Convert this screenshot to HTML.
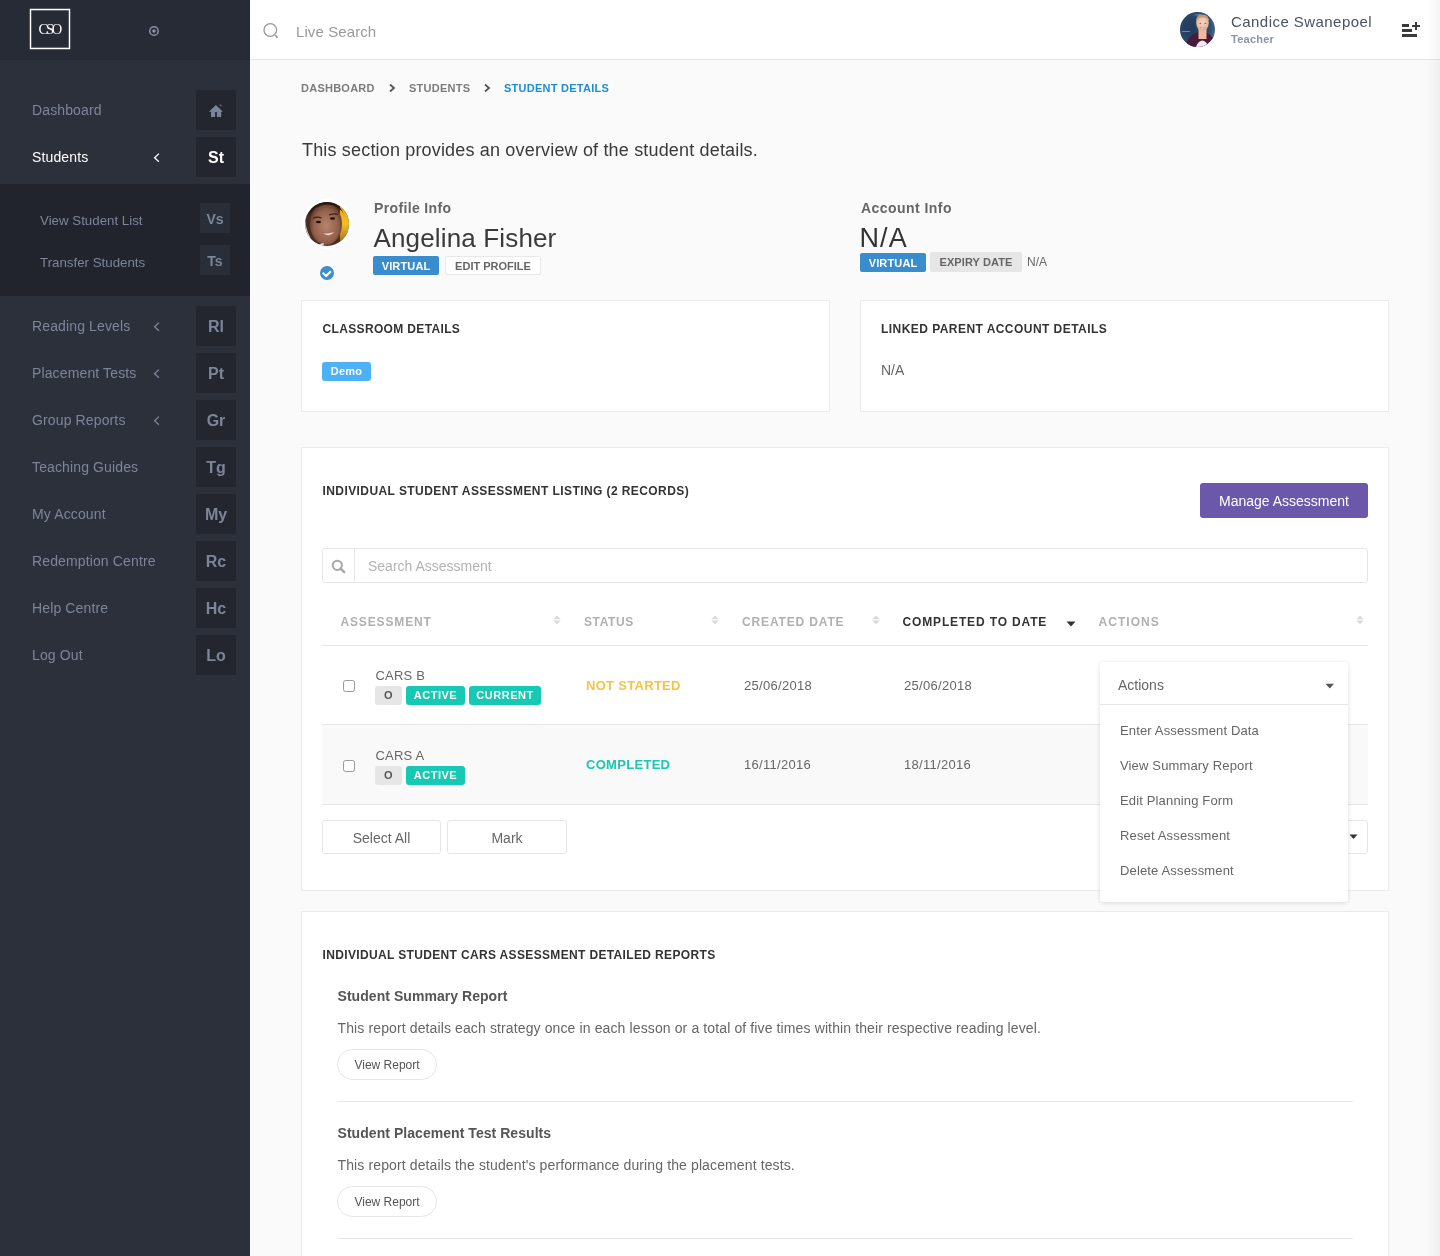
<!DOCTYPE html>
<html><head><meta charset="utf-8"><title>Student Details</title>
<style>
html,body{margin:0;padding:0}
body{width:1440px;height:1256px;overflow:hidden;position:relative;background:#fafafa;font-family:"Liberation Sans",sans-serif}
.r{position:absolute}
.t{position:absolute;line-height:1;white-space:nowrap}
#wrap{position:absolute;left:0;top:0;width:1440px;height:1256px;will-change:transform}
</style></head><body>
<div id="wrap">
<div class="r" style="left:0px;top:0px;width:250px;height:1256px;background:#2c303b"></div>
<div class="r" style="left:0px;top:0px;width:250px;height:60px;background:#272b36"></div>
<div class="r" style="left:30px;top:9px;width:40px;height:40px;border:1px solid #fff;box-sizing:border-box;box-shadow:0 0 0 0.4px rgba(255,255,255,.6), inset 0 0 0 0.4px rgba(255,255,255,.6)"></div>
<div class="t " style="left:38.5px;top:21.73px;font-size:14.5px;color:#fff;font-weight:400;font-family:'Liberation Serif',serif;letter-spacing:-2.2px">CSO</div>
<svg class="r" style="left:147px;top:24px" width="14" height="14" viewBox="0 0 14 14"><circle cx="7" cy="7" r="4.3" fill="none" stroke="#8a92a4" stroke-width="1.5"/><circle cx="7" cy="7" r="1.8" fill="#8a92a4"/></svg>
<div class="t " style="left:32px;top:103.15px;font-size:14px;color:#7d8598;font-weight:400;letter-spacing:0.13px">Dashboard</div>
<div class="r" style="left:196px;top:90px;width:40px;height:40px;background:#23262e"></div>
<svg class="r" style="left:206px;top:100px" width="20" height="20" viewBox="0 0 20 20"><path d="M9.9 5 L2.9 11.8 L5 11.8 L5 17 L9.1 17 L9.1 12.1 L10.9 12.1 L10.9 17 L15.2 17 L15.2 11.8 L16.9 11.8 Z" fill="#7b8499"/><path d="M13.2 4.7 L15.3 4.7 L15.3 6.9 Z" fill="#7b8499"/></svg>
<div class="t " style="left:32px;top:150.15px;font-size:14px;color:#fff;font-weight:400;letter-spacing:0.13px">Students</div>
<div class="r" style="left:196px;top:137px;width:40px;height:40px;background:#23262e"></div>
<div class="r" style="left:196px;top:137px;width:40px;height:40px;"></div>
<div class="t" style="left:196px;top:150.46px;width:40px;text-align:center;font-size:16px;color:#fff;font-weight:700;">St</div>
<svg class="r" style="left:151px;top:151px" width="10" height="12" viewBox="0 0 10 12"><path d="M7.9 2.6 L3.6 6.7 L7.9 10.8" fill="none" stroke="#fff" stroke-width="1.3"/></svg>
<div class="r" style="left:0px;top:184px;width:250px;height:112px;background:#21242c"></div>
<div class="t " style="left:40px;top:213.74px;font-size:13.3px;color:#7d8598;font-weight:400;">View Student List</div>
<div class="r" style="left:200px;top:203px;width:30px;height:30px;background:#2a2e38"></div>
<div class="t" style="left:200px;top:211.65px;width:30px;text-align:center;font-size:14px;color:#7d8598;font-weight:700;">Vs</div>
<div class="t " style="left:40px;top:255.74px;font-size:13.3px;color:#7d8598;font-weight:400;">Transfer Students</div>
<div class="r" style="left:200px;top:245px;width:30px;height:30px;background:#2a2e38"></div>
<div class="t" style="left:200px;top:253.65px;width:30px;text-align:center;font-size:14px;color:#7d8598;font-weight:700;">Ts</div>
<div class="t " style="left:32px;top:319.15px;font-size:14px;color:#7d8598;font-weight:400;letter-spacing:0.13px">Reading Levels</div>
<div class="r" style="left:196px;top:306px;width:40px;height:40px;background:#23262e"></div>
<div class="r" style="left:196px;top:306px;width:40px;height:40px;"></div>
<div class="t" style="left:196px;top:319.46px;width:40px;text-align:center;font-size:16px;color:#7d8598;font-weight:700;">Rl</div>
<svg class="r" style="left:151px;top:320px" width="10" height="12" viewBox="0 0 10 12"><path d="M7.9 2.6 L3.6 6.7 L7.9 10.8" fill="none" stroke="#7d8598" stroke-width="1.3"/></svg>
<div class="t " style="left:32px;top:366.15px;font-size:14px;color:#7d8598;font-weight:400;letter-spacing:0.13px">Placement Tests</div>
<div class="r" style="left:196px;top:353px;width:40px;height:40px;background:#23262e"></div>
<div class="r" style="left:196px;top:353px;width:40px;height:40px;"></div>
<div class="t" style="left:196px;top:366.46px;width:40px;text-align:center;font-size:16px;color:#7d8598;font-weight:700;">Pt</div>
<svg class="r" style="left:151px;top:367px" width="10" height="12" viewBox="0 0 10 12"><path d="M7.9 2.6 L3.6 6.7 L7.9 10.8" fill="none" stroke="#7d8598" stroke-width="1.3"/></svg>
<div class="t " style="left:32px;top:413.15px;font-size:14px;color:#7d8598;font-weight:400;letter-spacing:0.13px">Group Reports</div>
<div class="r" style="left:196px;top:400px;width:40px;height:40px;background:#23262e"></div>
<div class="r" style="left:196px;top:400px;width:40px;height:40px;"></div>
<div class="t" style="left:196px;top:413.46px;width:40px;text-align:center;font-size:16px;color:#7d8598;font-weight:700;">Gr</div>
<svg class="r" style="left:151px;top:414px" width="10" height="12" viewBox="0 0 10 12"><path d="M7.9 2.6 L3.6 6.7 L7.9 10.8" fill="none" stroke="#7d8598" stroke-width="1.3"/></svg>
<div class="t " style="left:32px;top:460.15px;font-size:14px;color:#7d8598;font-weight:400;letter-spacing:0.13px">Teaching Guides</div>
<div class="r" style="left:196px;top:447px;width:40px;height:40px;background:#23262e"></div>
<div class="r" style="left:196px;top:447px;width:40px;height:40px;"></div>
<div class="t" style="left:196px;top:460.46px;width:40px;text-align:center;font-size:16px;color:#7d8598;font-weight:700;">Tg</div>
<div class="t " style="left:32px;top:507.15px;font-size:14px;color:#7d8598;font-weight:400;letter-spacing:0.13px">My Account</div>
<div class="r" style="left:196px;top:494px;width:40px;height:40px;background:#23262e"></div>
<div class="r" style="left:196px;top:494px;width:40px;height:40px;"></div>
<div class="t" style="left:196px;top:507.46px;width:40px;text-align:center;font-size:16px;color:#7d8598;font-weight:700;">My</div>
<div class="t " style="left:32px;top:554.15px;font-size:14px;color:#7d8598;font-weight:400;letter-spacing:0.13px">Redemption Centre</div>
<div class="r" style="left:196px;top:541px;width:40px;height:40px;background:#23262e"></div>
<div class="r" style="left:196px;top:541px;width:40px;height:40px;"></div>
<div class="t" style="left:196px;top:554.46px;width:40px;text-align:center;font-size:16px;color:#7d8598;font-weight:700;">Rc</div>
<div class="t " style="left:32px;top:601.15px;font-size:14px;color:#7d8598;font-weight:400;letter-spacing:0.13px">Help Centre</div>
<div class="r" style="left:196px;top:588px;width:40px;height:40px;background:#23262e"></div>
<div class="r" style="left:196px;top:588px;width:40px;height:40px;"></div>
<div class="t" style="left:196px;top:601.46px;width:40px;text-align:center;font-size:16px;color:#7d8598;font-weight:700;">Hc</div>
<div class="t " style="left:32px;top:648.15px;font-size:14px;color:#7d8598;font-weight:400;letter-spacing:0.13px">Log Out</div>
<div class="r" style="left:196px;top:635px;width:40px;height:40px;background:#23262e"></div>
<div class="r" style="left:196px;top:635px;width:40px;height:40px;"></div>
<div class="t" style="left:196px;top:648.46px;width:40px;text-align:center;font-size:16px;color:#7d8598;font-weight:700;">Lo</div>
<div class="r" style="left:250px;top:0px;width:1190px;height:59px;background:#fff"></div>
<div class="r" style="left:250px;top:59px;width:1190px;height:1px;background:#e6e6e6"></div>
<svg class="r" style="left:262px;top:22px" width="20" height="20" viewBox="0 0 20 20"><circle cx="8.3" cy="8" r="6.3" fill="none" stroke="#999" stroke-width="1.3"/><path d="M13.4 13.4 L15.6 15.6" stroke="#999" stroke-width="1.8"/></svg>
<div class="t " style="left:296px;top:24.30px;font-size:15px;color:#9a9a9a;font-weight:400;letter-spacing:0.1px">Live Search</div>
<svg class="r" style="left:1180px;top:12px" width="35" height="35" viewBox="0 0 35 35"><defs><clipPath id="ca"><circle cx="17.5" cy="17.5" r="17.5"/></clipPath><radialGradient id="tbg" cx="0.3" cy="0.45" r="0.8"><stop offset="0" stop-color="#1f3a5a"/><stop offset="0.7" stop-color="#2f4d6e"/><stop offset="1" stop-color="#5a7898"/></radialGradient><radialGradient id="tface" cx="0.5" cy="0.45" r="0.6"><stop offset="0" stop-color="#f6d6c4"/><stop offset="1" stop-color="#e2ac8c"/></radialGradient></defs><g clip-path="url(#ca)"><rect width="35" height="35" fill="url(#tbg)"/><path d="M12 3 L20 2 L28 5 L22 4Z" fill="#8aa4c4" opacity=".7"/><rect x="2" y="19" width="8" height="1" fill="#9ab0cc" opacity=".6"/><path d="M4 40 L8 27 Q14 20 19.5 20 L27 21 Q33 24 35 30 L35 40Z" fill="#4b1c3a"/><rect x="18.5" y="17" width="8" height="10" fill="#eebb9c"/><path d="M15 40 Q16 30 22 28.5 Q28 29 30 40Z" fill="#ecebf4"/><ellipse cx="22.5" cy="11" rx="6.3" ry="8" fill="url(#tface)"/><path d="M16.2 10 Q15.8 2.5 22.5 2.6 Q29 2.6 29 10 Q28 5.5 22.5 5.2 Q17.5 5.5 16.2 10Z" fill="#c49a6c"/><ellipse cx="20.3" cy="11.3" rx="1" ry=".6" fill="#5a6a8a"/><ellipse cx="25.3" cy="11.3" rx="1" ry=".6" fill="#5a6a8a"/><path d="M20 15.5 Q22.7 18.8 25.5 15.5 Q22.7 16.5 20 15.5Z" fill="#fff" stroke="#c77" stroke-width=".5"/></g></svg>
<div class="t " style="left:1231px;top:14.30px;font-size:15px;color:#4a5263;font-weight:400;letter-spacing:0.45px">Candice Swanepoel</div>
<div class="t " style="left:1231px;top:33.69px;font-size:11px;color:#8b94a7;font-weight:700;letter-spacing:0.25px">Teacher</div>
<svg class="r" style="left:1400px;top:20px" width="22" height="20" viewBox="0 0 22 20"><rect x="2" y="4" width="7" height="3" fill="#3a3a3a"/><rect x="2" y="9" width="10" height="3" fill="#3a3a3a"/><rect x="2" y="14" width="15" height="3" fill="#3a3a3a"/><rect x="15" y="2" width="2" height="8" fill="#3a3a3a"/><rect x="12" y="5" width="8" height="2" fill="#3a3a3a"/></svg>
<div class="t " style="left:301px;top:82.69px;font-size:11px;color:#7c7c7c;font-weight:700;letter-spacing:0.25px">DASHBOARD</div>
<svg class="r" style="left:388px;top:83px" width="9" height="10" viewBox="0 0 9 10"><path d="M2 1.5 L6 5 L2 8.5" fill="none" stroke="#555" stroke-width="1.8"/></svg>
<div class="t " style="left:409px;top:82.69px;font-size:11px;color:#7c7c7c;font-weight:700;letter-spacing:0.25px">STUDENTS</div>
<svg class="r" style="left:483px;top:83px" width="9" height="10" viewBox="0 0 9 10"><path d="M2 1.5 L6 5 L2 8.5" fill="none" stroke="#555" stroke-width="1.8"/></svg>
<div class="t " style="left:504px;top:82.69px;font-size:11px;color:#1b8ed4;font-weight:700;letter-spacing:0.25px">STUDENT DETAILS</div>
<div class="t " style="left:302px;top:140.76px;font-size:18px;color:#3a3a3a;font-weight:400;letter-spacing:0.17px">This section provides an overview of the student details.</div>
<svg class="r" style="left:302px;top:199px" width="50" height="50" viewBox="0 0 50 50"><defs><clipPath id="cp"><circle cx="25" cy="25" r="22"/></clipPath><radialGradient id="pface" cx="0.5" cy="0.55" r="0.55"><stop offset="0" stop-color="#b88670"/><stop offset="0.7" stop-color="#93604a"/><stop offset="1" stop-color="#5e3a2c"/></radialGradient><linearGradient id="pyel" x1="0" y1="0" x2="0" y2="1"><stop offset="0" stop-color="#e8a020"/><stop offset="0.5" stop-color="#f4c020"/><stop offset="1" stop-color="#9a6a20"/></linearGradient></defs><circle cx="25" cy="25" r="25" fill="#fff"/><g clip-path="url(#cp)"><rect width="50" height="50" fill="#4a2e24"/><rect x="38" y="5" width="12" height="40" fill="url(#pyel)"/><path d="M3 20 Q4 34 12 44 L6 50 L0 50 L0 20Z" fill="#d8cfc0"/><ellipse cx="24" cy="25" rx="16" ry="21" fill="url(#pface)"/><path d="M6 18 Q9 3 25 2.5 Q38 3 42 16 Q38 6 25 5.5 Q12 6 6 18Z" fill="#2a1812"/><path d="M11 19.5 Q15 17 19.5 19" fill="none" stroke="#3a2418" stroke-width="1.2"/><path d="M27 16 Q32 14 36 15.5" fill="none" stroke="#3a2418" stroke-width="1.2"/><ellipse cx="16.5" cy="23" rx="2.6" ry="1.3" fill="#20120c"/><ellipse cx="30.5" cy="19.5" rx="2.6" ry="1.3" fill="#20120c"/><path d="M20 34 Q27 39.5 33 32.5 Q27 35 20 34Z" fill="#f4f0e8" stroke="#a0504a" stroke-width=".6"/><path d="M14 46 L22 44 L20 50 L12 50Z" fill="#e8e8f0"/></g></svg>
<svg class="r" style="left:320px;top:266px" width="14" height="14" viewBox="0 0 14 14"><circle cx="7" cy="7" r="7" fill="#3b8ed0"/><path d="M2.7 6.8 L6.1 10.1 L10.9 5.3" fill="none" stroke="#fff" stroke-width="2.1"/></svg>
<div class="t " style="left:374px;top:201.15px;font-size:14px;color:#666;font-weight:700;letter-spacing:0.35px">Profile Info</div>
<div class="t " style="left:373.5px;top:224.99px;font-size:26px;color:#3a3a3a;font-weight:400;letter-spacing:0.15px">Angelina Fisher</div>
<div class="r" style="left:373px;top:256px;width:66px;height:19px;background:#3a8dcc;border-radius:2px"></div>
<div class="t" style="left:373px;top:260.69px;width:66px;text-align:center;font-size:11px;color:#fff;font-weight:700;letter-spacing:0.15px">VIRTUAL</div>
<div class="r" style="left:445px;top:256px;width:96px;height:19px;background:#fff;border:1px solid #e8e8e8;box-sizing:border-box;border-radius:2px"></div>
<div class="t" style="left:445px;top:260.69px;width:96px;text-align:center;font-size:11px;color:#666;font-weight:700;letter-spacing:0px">EDIT PROFILE</div>
<div class="t " style="left:861px;top:201.15px;font-size:14px;color:#666;font-weight:700;letter-spacing:0.45px">Account Info</div>
<div class="t " style="left:859.5px;top:225.14px;font-size:27px;color:#333;font-weight:400;letter-spacing:1.1px">N/A</div>
<div class="r" style="left:860px;top:253px;width:66px;height:19px;background:#3a8dcc;border-radius:2px"></div>
<div class="t" style="left:860px;top:257.69px;width:66px;text-align:center;font-size:11px;color:#fff;font-weight:700;letter-spacing:0.15px">VIRTUAL</div>
<div class="r" style="left:930px;top:252px;width:92px;height:20px;background:#e6e6e6;border-radius:2px"></div>
<div class="t" style="left:930px;top:257.19px;width:92px;text-align:center;font-size:11px;color:#666;font-weight:700;letter-spacing:0.1px">EXPIRY DATE</div>
<div class="t " style="left:1027px;top:255.84px;font-size:12px;color:#666;font-weight:400;">N/A</div>
<div class="r" style="left:301px;top:300px;width:529px;height:112px;background:#fff;border:1px solid #ebebeb;box-sizing:border-box"></div>
<div class="t " style="left:322.5px;top:322.84px;font-size:12px;color:#333;font-weight:700;letter-spacing:0.35px">CLASSROOM DETAILS</div>
<div class="r" style="left:322px;top:362px;width:49px;height:19px;background:#4cb1f5;border-radius:3px"></div>
<div class="t" style="left:322px;top:365.69px;width:49px;text-align:center;font-size:11px;color:#fff;font-weight:700;letter-spacing:0.2px">Demo</div>
<div class="r" style="left:860px;top:300px;width:529px;height:112px;background:#fff;border:1px solid #ebebeb;box-sizing:border-box"></div>
<div class="t " style="left:881px;top:322.84px;font-size:12px;color:#333;font-weight:700;letter-spacing:0.45px">LINKED PARENT ACCOUNT DETAILS</div>
<div class="t " style="left:881px;top:363.15px;font-size:14px;color:#666;font-weight:400;">N/A</div>
<div class="r" style="left:301px;top:447px;width:1088px;height:444px;background:#fff;border:1px solid #ebebeb;box-sizing:border-box"></div>
<div class="t " style="left:322.5px;top:484.84px;font-size:12px;color:#333;font-weight:700;letter-spacing:0.42px">INDIVIDUAL STUDENT ASSESSMENT LISTING (2 RECORDS)</div>
<div class="r" style="left:1200px;top:483px;width:168px;height:35px;background:#6b58ab;border-radius:3px"></div>
<div class="t" style="left:1200px;top:494.15px;width:168px;text-align:center;font-size:14px;color:#fff;font-weight:400;">Manage Assessment</div>
<div class="r" style="left:322px;top:548px;width:1046px;height:35px;border:1px solid #e6e6e6;border-radius:3px;box-sizing:border-box;background:#fff"></div>
<div class="r" style="left:354px;top:549px;width:1px;height:33px;background:#e6e6e6"></div>
<svg class="r" style="left:331px;top:559px" width="15" height="15" viewBox="0 0 15 15"><circle cx="6.3" cy="6.3" r="4.6" fill="none" stroke="#a8a8a8" stroke-width="2"/><path d="M9.6 9.6 L13.2 13.2" stroke="#a8a8a8" stroke-width="2.4" stroke-linecap="round"/></svg>
<div class="t " style="left:368px;top:559.15px;font-size:14px;color:#b3b3b3;font-weight:400;">Search Assessment</div>
<div class="t " style="left:340.5px;top:615.84px;font-size:12px;color:#b0b0b0;font-weight:700;letter-spacing:0.85px">ASSESSMENT</div>
<div class="t " style="left:584px;top:615.84px;font-size:12px;color:#b0b0b0;font-weight:700;letter-spacing:0.6px">STATUS</div>
<div class="t " style="left:742px;top:615.84px;font-size:12px;color:#b0b0b0;font-weight:700;letter-spacing:0.85px">CREATED DATE</div>
<div class="t " style="left:902.5px;top:615.84px;font-size:12px;color:#333;font-weight:700;letter-spacing:0.85px">COMPLETED TO DATE</div>
<div class="t " style="left:1098.5px;top:615.84px;font-size:12px;color:#b0b0b0;font-weight:700;letter-spacing:1.05px">ACTIONS</div>
<svg class="r" style="left:553px;top:615px" width="8" height="10" viewBox="0 0 8 10"><path d="M0.3 4.3 L4 0.6 L7.7 4.3Z M0.3 5.5 L4 9.2 L7.7 5.5Z" fill="#d8d8d8"/></svg>
<svg class="r" style="left:711px;top:615px" width="8" height="10" viewBox="0 0 8 10"><path d="M0.3 4.3 L4 0.6 L7.7 4.3Z M0.3 5.5 L4 9.2 L7.7 5.5Z" fill="#d8d8d8"/></svg>
<svg class="r" style="left:872px;top:615px" width="8" height="10" viewBox="0 0 8 10"><path d="M0.3 4.3 L4 0.6 L7.7 4.3Z M0.3 5.5 L4 9.2 L7.7 5.5Z" fill="#d8d8d8"/></svg>
<svg class="r" style="left:1356px;top:615px" width="8" height="10" viewBox="0 0 8 10"><path d="M0.3 4.3 L4 0.6 L7.7 4.3Z M0.3 5.5 L4 9.2 L7.7 5.5Z" fill="#d8d8d8"/></svg>
<svg class="r" style="left:1066px;top:621px" width="10" height="6" viewBox="0 0 10 6"><path d="M0.5 0.5 L9.5 0.5 L5 5.5Z" fill="#333"/></svg>
<div class="r" style="left:322px;top:645px;width:1046px;height:1px;background:#e6e6e6"></div>
<div class="r" style="left:322px;top:724px;width:1046px;height:1px;background:#e6e6e6"></div>
<div class="r" style="left:322px;top:725px;width:1046px;height:79px;background:#f9f9f9"></div>
<div class="r" style="left:322px;top:804px;width:1046px;height:1px;background:#e6e6e6"></div>
<div class="r" style="left:343px;top:680px;width:12px;height:12px;border:1px solid #9a9a9a;border-radius:2.5px;box-sizing:border-box;background:#fff"></div>
<div class="t " style="left:375.5px;top:669.00px;font-size:13px;color:#666;font-weight:400;letter-spacing:0.2px">CARS B</div>
<div class="r" style="left:375px;top:686px;width:27px;height:19px;background:#e6e6e6;border-radius:3px"></div>
<div class="t" style="left:375px;top:690.19px;width:27px;text-align:center;font-size:11px;color:#555;font-weight:700;letter-spacing:0.5px">O</div>
<div class="r" style="left:406px;top:686px;width:59px;height:19px;background:#17c8b4;border-radius:3px"></div>
<div class="t" style="left:406px;top:690.19px;width:59px;text-align:center;font-size:11px;color:#fff;font-weight:700;letter-spacing:0.5px">ACTIVE</div>
<div class="r" style="left:469px;top:686px;width:72px;height:19px;background:#17c8b4;border-radius:3px"></div>
<div class="t" style="left:469px;top:690.19px;width:72px;text-align:center;font-size:11px;color:#fff;font-weight:700;letter-spacing:0.5px">CURRENT</div>
<div class="t " style="left:586px;top:679.00px;font-size:13px;color:#f6c445;font-weight:700;letter-spacing:0.3px">NOT STARTED</div>
<div class="t " style="left:744px;top:679.00px;font-size:13px;color:#666;font-weight:400;letter-spacing:0.3px">25/06/2018</div>
<div class="t " style="left:904px;top:679.00px;font-size:13px;color:#666;font-weight:400;letter-spacing:0.3px">25/06/2018</div>
<div class="r" style="left:343px;top:760px;width:12px;height:12px;border:1px solid #9a9a9a;border-radius:2.5px;box-sizing:border-box;background:#fff"></div>
<div class="t " style="left:375.5px;top:749.00px;font-size:13px;color:#666;font-weight:400;letter-spacing:0.2px">CARS A</div>
<div class="r" style="left:375px;top:766px;width:27px;height:19px;background:#e6e6e6;border-radius:3px"></div>
<div class="t" style="left:375px;top:770.19px;width:27px;text-align:center;font-size:11px;color:#555;font-weight:700;letter-spacing:0.5px">O</div>
<div class="r" style="left:406px;top:766px;width:59px;height:19px;background:#17c8b4;border-radius:3px"></div>
<div class="t" style="left:406px;top:770.19px;width:59px;text-align:center;font-size:11px;color:#fff;font-weight:700;letter-spacing:0.5px">ACTIVE</div>
<div class="t " style="left:586px;top:758.00px;font-size:13px;color:#17c8b4;font-weight:700;letter-spacing:0.3px">COMPLETED</div>
<div class="t " style="left:744px;top:758.00px;font-size:13px;color:#666;font-weight:400;letter-spacing:0.3px">16/11/2016</div>
<div class="t " style="left:904px;top:758.00px;font-size:13px;color:#666;font-weight:400;letter-spacing:0.3px">18/11/2016</div>
<div class="r" style="left:322px;top:820px;width:119px;height:34px;background:#fff;border:1px solid #e6e6e6;border-radius:3px;box-sizing:border-box"></div>
<div class="t" style="left:322px;top:831.15px;width:119px;text-align:center;font-size:14px;color:#666;font-weight:400;">Select All</div>
<div class="r" style="left:447px;top:820px;width:120px;height:34px;background:#fff;border:1px solid #e6e6e6;border-radius:3px;box-sizing:border-box"></div>
<div class="t" style="left:447px;top:831.15px;width:120px;text-align:center;font-size:14px;color:#666;font-weight:400;">Mark</div>
<div class="r" style="left:1100px;top:820px;width:268px;height:34px;background:#fff;border:1px solid #e6e6e6;border-radius:3px;box-sizing:border-box"></div>
<svg class="r" style="left:1349px;top:834px" width="10" height="6" viewBox="0 0 10 6"><path d="M0.5 0.5 L8.5 0.5 L4.5 5Z" fill="#333"/></svg>
<div class="r" style="left:1100px;top:662px;width:248px;height:240px;background:#fff;border-radius:4px;box-shadow:0 1px 5px rgba(0,0,0,0.13)"></div>
<div class="t " style="left:1118px;top:678.15px;font-size:14px;color:#666;font-weight:400;">Actions</div>
<svg class="r" style="left:1325px;top:683px" width="10" height="7" viewBox="0 0 10 7"><path d="M0.5 0.8 L9 0.8 L4.75 5.5Z" fill="#555"/></svg>
<div class="r" style="left:1100px;top:704px;width:248px;height:1px;background:#e6e6e6"></div>
<div class="t " style="left:1120px;top:724.00px;font-size:13px;color:#666;font-weight:400;letter-spacing:0.15px">Enter Assessment Data</div>
<div class="t " style="left:1120px;top:759.00px;font-size:13px;color:#666;font-weight:400;letter-spacing:0.15px">View Summary Report</div>
<div class="t " style="left:1120px;top:794.00px;font-size:13px;color:#666;font-weight:400;letter-spacing:0.15px">Edit Planning Form</div>
<div class="t " style="left:1120px;top:829.00px;font-size:13px;color:#666;font-weight:400;letter-spacing:0.15px">Reset Assessment</div>
<div class="t " style="left:1120px;top:864.00px;font-size:13px;color:#666;font-weight:400;letter-spacing:0.15px">Delete Assessment</div>
<div class="r" style="left:301px;top:911px;width:1088px;height:400px;background:#fff;border:1px solid #ebebeb;box-sizing:border-box"></div>
<div class="t " style="left:322.5px;top:948.84px;font-size:12px;color:#333;font-weight:700;letter-spacing:0.35px">INDIVIDUAL STUDENT CARS ASSESSMENT DETAILED REPORTS</div>
<div class="t " style="left:337.5px;top:989.15px;font-size:14px;color:#555;font-weight:700;letter-spacing:0.05px">Student Summary Report</div>
<div class="t " style="left:337.5px;top:1021.15px;font-size:14px;color:#666;font-weight:400;letter-spacing:0.12px">This report details each strategy once in each lesson or a total of five times within their respective reading level.</div>
<div class="r" style="left:337px;top:1049px;width:100px;height:31px;background:#fff;border:1px solid #e6e6e6;border-radius:16px;box-sizing:border-box"></div>
<div class="t" style="left:337px;top:1058.84px;width:100px;text-align:center;font-size:12px;color:#555;font-weight:400;">View Report</div>
<div class="r" style="left:337px;top:1101px;width:1016px;height:1px;background:#e6e6e6"></div>
<div class="t " style="left:337.5px;top:1126.15px;font-size:14px;color:#555;font-weight:700;letter-spacing:0.05px">Student Placement Test Results</div>
<div class="t " style="left:337.5px;top:1158.15px;font-size:14px;color:#666;font-weight:400;letter-spacing:0.12px">This report details the student's performance during the placement tests.</div>
<div class="r" style="left:337px;top:1186px;width:100px;height:31px;background:#fff;border:1px solid #e6e6e6;border-radius:16px;box-sizing:border-box"></div>
<div class="t" style="left:337px;top:1195.84px;width:100px;text-align:center;font-size:12px;color:#555;font-weight:400;">View Report</div>
<div class="r" style="left:337px;top:1238px;width:1016px;height:1px;background:#e6e6e6"></div>
<div class="r" style="left:1426px;top:0px;width:14px;height:1256px;background:linear-gradient(to right, rgba(0,0,0,0), rgba(0,0,0,0.045))"></div>
</div></body></html>
